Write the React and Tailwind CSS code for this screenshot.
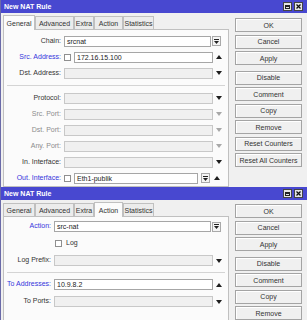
const tone = {
  dark: 'text-[#333]',
  blue: 'text-[#3535dc]',
  grey: 'text-[#8c8c8c]',
};

function Arrow({ dir = 'down', muted }) {
  const c = muted ? '#a8a8a8' : '#1e1e1e';
  return (
    <svg width="6" height="4" viewBox="0 0 6 4" className="shrink-0">
      <path d={dir === 'down' ? 'M0 0H6L3 4Z' : 'M0 4H6L3 0Z'} fill={c} />
    </svg>
  );
}

function DropBox() {
  return (
    <div className="w-[9px] h-[10px] border border-[#a9a9a9] bg-[#f4f4f4] flex flex-col items-center justify-center gap-[1px] shrink-0">
      <div className="w-[5px] h-px bg-[#222]" />
      <svg width="5" height="3" viewBox="0 0 5 3"><path d="M0 0H5L2.5 3Z" fill="#222" /></svg>
    </div>
  );
}

function Check() {
  return <div className="w-[7px] h-[7px] border border-[#8f8f8f] bg-white shrink-0" />;
}

function Field({ value, disabled }) {
  return (
    <div className={`flex-1 min-w-0 h-[11px] border flex items-center px-[2px] leading-none text-[#1a1a1a] ${disabled ? 'bg-[#f0f0f0] border-[#c8c8c8]' : 'bg-white border-[#a6a6a6]'}`}>
      {value}
    </div>
  );
}

function Row({ label, color = 'dark', lw, h, children }) {
  return (
    <div className={`flex items-center ${h}`}>
      <div className={`${lw} shrink-0 text-right pr-[3px] ${tone[color]}`}>{label}</div>
      {children}
    </div>
  );
}

function Trail({ dir, muted }) {
  return (
    <div className="w-[15px] shrink-0 pl-[3px] flex items-center">
      {dir && <Arrow dir={dir} muted={muted} />}
    </div>
  );
}

function BoxTrail() {
  return (
    <div className="w-[17px] shrink-0 pl-[1px] flex items-center">
      <DropBox />
    </div>
  );
}

function TitleBar() {
  return (
    <div className="h-[13px] shrink-0 bg-[#4848d0] flex items-center justify-between pl-[3px] pr-[4px]">
      <span className="text-white font-bold text-[7px] leading-none">New NAT Rule</span>
      <div className="flex gap-[2px]">
        <div className="w-[9px] h-[9px] bg-[#e4e4e4] border border-[#444] flex items-center justify-center">
          <div className="w-[5px] h-[4px] border border-[#222] border-t-2" />
        </div>
        <div className="w-[9px] h-[9px] bg-[#e4e4e4] border border-[#444] flex items-center justify-center">
          <svg width="5" height="5" viewBox="0 0 5 5"><path d="M0.5 0.5L4.5 4.5M4.5 0.5L0.5 4.5" stroke="#111" strokeWidth="1.3" /></svg>
        </div>
      </div>
    </div>
  );
}

const tabs = [
  ['General', 'w-[32px]'],
  ['Advanced', 'w-[39px]'],
  ['Extra', 'w-[20px]'],
  ['Action', 'w-[29px]'],
  ['Statistics', 'w-[31px]'],
];

function Tabs({ active }) {
  return (
    <div className="flex items-end h-[16px] shrink-0 pt-[2px]">
      {tabs.map(([t, w]) => (
        <div
          key={t}
          className={`${w} shrink-0 flex items-center justify-center border border-[#c0c0c0] leading-none text-[#333] ${
            t === active ? 'h-[15px] bg-[#fbfbfb] border-b-0 -mb-px relative' : 'h-[13px] bg-[#ececec] border-b-0'
          }`}
        >
          {t}
        </div>
      ))}
    </div>
  );
}

function Buttons({ list, pad }) {
  return (
    <div className={`w-[67px] ml-[6px] flex flex-col gap-[2.5px] ${pad}`}>
      {list.map((b, i) => (
        <div
          key={b}
          className={`h-[14px] shrink-0 border border-[#a4a4a4] bg-[#f0f0f0] shadow-[inset_1px_1px_0_#fff] flex items-center justify-center text-[#333] leading-none ${i === 3 ? 'mt-[3px]' : ''}`}
        >
          {b}
        </div>
      ))}
    </div>
  );
}

function Sep() {
  return <div className="h-px bg-[#d4d4d4] mx-[3px] my-[3px]" />;
}

function WindowOne() {
  const lw = 'w-[60px]';
  const h = 'h-[16px]';
  return (
    <div className="h-[187px] shrink-0 flex flex-col bg-[#f0f0f0] border-l border-[#6a6aa8]">
      <TitleBar />
      <div className="flex flex-1 min-h-0">
        <div className="w-[226px] ml-[2px] flex flex-col">
          <Tabs active="General" />
          <div className="flex-1 border border-[#c0c0c0] bg-[#fbfbfb] pt-[3px]">
            <Row label="Chain:" lw={lw} h={h}><Field value="srcnat" /><BoxTrail /></Row>
            <Row label="Src. Address:" color="blue" lw={lw} h={h}>
              <Check /><div className="w-[3px]" /><Field value="172.16.15.100" /><Trail dir="up" />
            </Row>
            <Row label="Dst. Address:" lw={lw} h={h}><Field disabled /><Trail dir="down" /></Row>
            <div className="h-[1px]" />
            <Sep />
            <div className="h-[1px]" />
            <Row label="Protocol:" lw={lw} h={h}><Field disabled /><Trail dir="down" /></Row>
            <Row label="Src. Port:" color="grey" lw={lw} h={h}><Field disabled /><Trail dir="down" muted /></Row>
            <Row label="Dst. Port:" color="grey" lw={lw} h={h}><Field disabled /><Trail dir="down" muted /></Row>
            <Row label="Any. Port:" color="grey" lw={lw} h={h}><Field disabled /><Trail dir="down" muted /></Row>
            <Row label="In. Interface:" lw={lw} h={h}><Field disabled /><Trail dir="down" /></Row>
            <Row label="Out. Interface:" color="blue" lw={lw} h={h}>
              <Check /><div className="w-[3px]" /><Field value="Eth1-publik" />
              <div className="w-[3px]" /><DropBox /><div className="w-[4px]" />
              <Arrow dir="up" /><div className="w-[8px]" />
            </Row>
          </div>
        </div>
        <Buttons
          pad="pt-[5px]"
          list={['OK', 'Cancel', 'Apply', 'Disable', 'Comment', 'Copy', 'Remove', 'Reset Counters', 'Reset All Counters']}
        />
      </div>
    </div>
  );
}

function WindowTwo() {
  const lw = 'w-[50px]';
  const h = 'h-[17px]';
  return (
    <div className="flex-1 min-h-0 flex flex-col bg-[#f0f0f0] border-l border-[#6a6aa8]">
      <TitleBar />
      <div className="flex flex-1 min-h-0">
        <div className="w-[226px] ml-[2px] flex flex-col">
          <Tabs active="Action" />
          <div className="flex-1 border border-b-0 border-[#c0c0c0] bg-[#fbfbfb] pt-[1px]">
            <Row label="Action:" color="blue" lw={lw} h={h}><Field value="src-nat" /><BoxTrail /></Row>
            <Row label="" lw={lw} h={h}>
              <div className="w-[1px]" /><Check /><span className="ml-[4px] text-[#333]">Log</span>
            </Row>
            <Row label="Log Prefix:" lw={lw} h={h}><Field disabled /><Trail dir="down" /></Row>
            <Sep />
            <Row label="To Addresses:" color="blue" lw={lw} h={h}><Field value="10.9.8.2" /><Trail dir="up" /></Row>
            <Row label="To Ports:" lw={lw} h={h}><Field disabled /><Trail dir="down" /></Row>
          </div>
        </div>
        <Buttons pad="pt-[4px]" list={['OK', 'Cancel', 'Apply', 'Disable', 'Comment', 'Copy', 'Remove']} />
      </div>
    </div>
  );
}

export default function App() {
  return (
    <div className="w-[307px] h-[320px] overflow-hidden flex flex-col bg-white text-[7px] font-['Liberation_Sans',Arial,sans-serif]">
      <WindowOne />
      <WindowTwo />
    </div>
  );
}
